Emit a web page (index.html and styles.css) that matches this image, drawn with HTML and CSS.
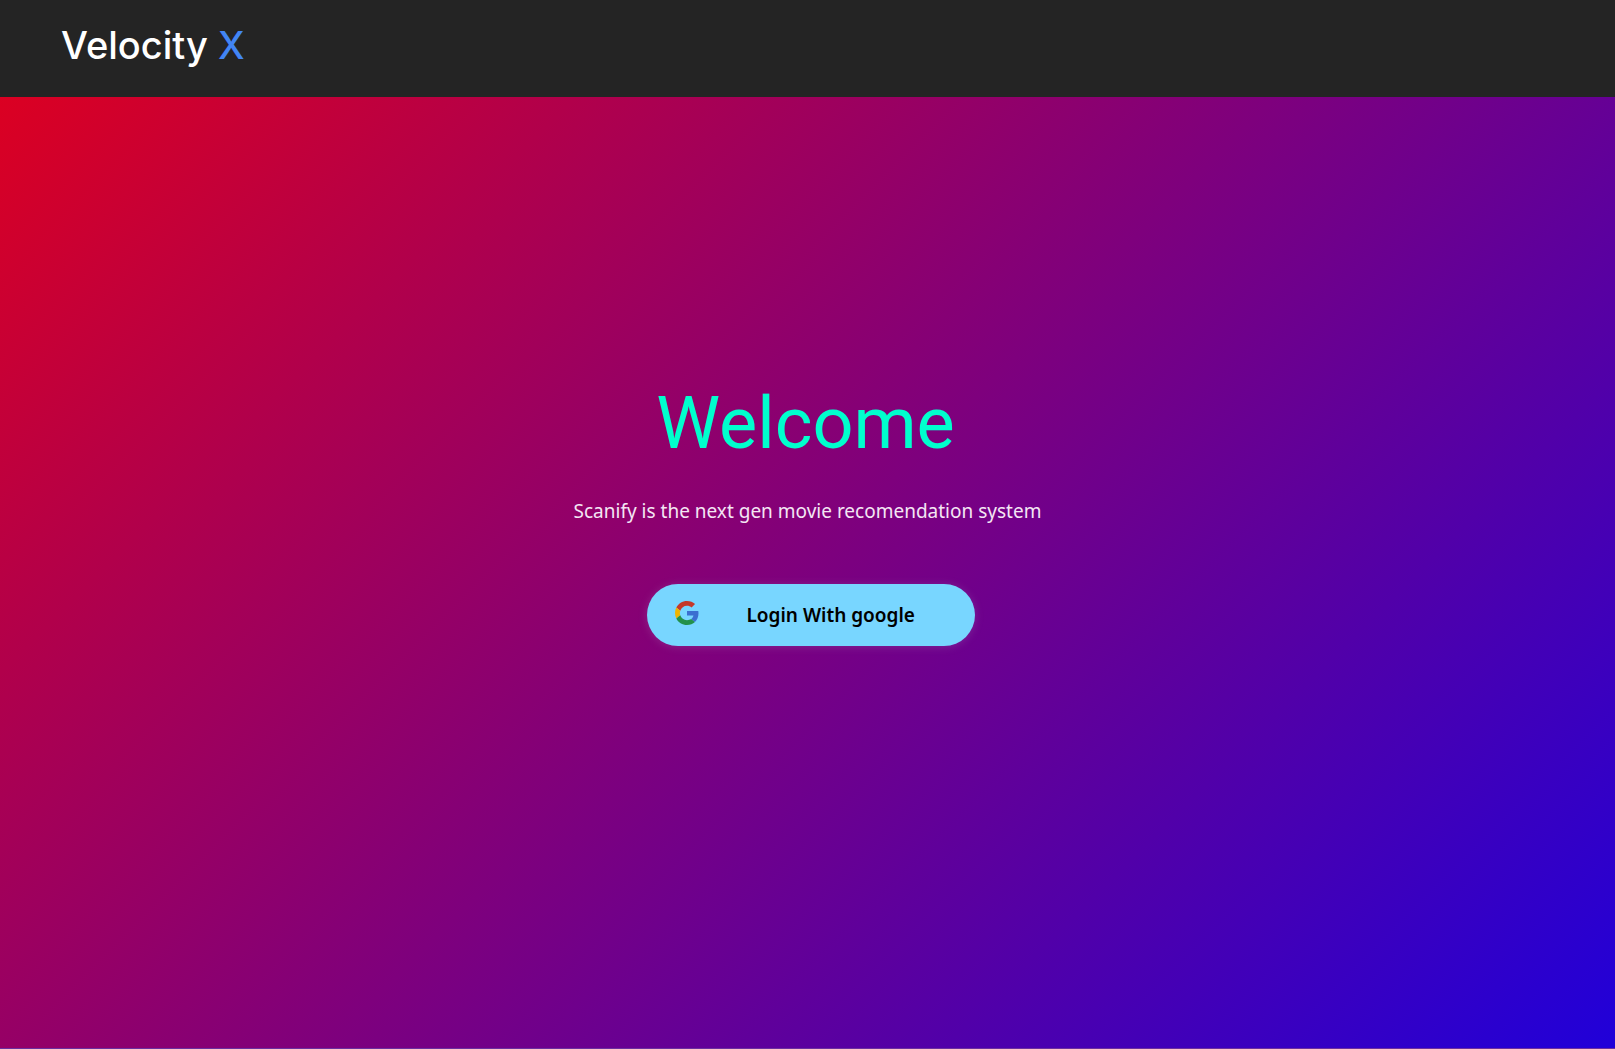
FILE: index.html
```html
<!DOCTYPE html>
<html lang="en">
<head>
  <meta charset="utf-8">
  <meta name="viewport" content="width=device-width, initial-scale=1">
  <title>Velocity X</title>
  <link rel="stylesheet" href="styles.css">
</head>
<body>
  <header class="site-header">
    <div class="brand">Velocity <span class="brand-mark">X</span></div>
  </header>
  <main class="hero">
    <h1 class="hero-title">Welcome</h1>
    <p class="hero-text">Scanify is the next gen movie recomendation system</p>
    <button class="login" type="button">
      <svg class="login-icon" viewBox="0 0 48 48" aria-hidden="true">
        <path fill="#c53929" d="M24 9.5c3.5 0 6.700 1.200 9.200 3.600l6.900-6.900C35.900 2.400 30.500 0 24 0 14.600 0 6.500 5.400 2.600 13.200l8 6.200C12.400 13.700 17.700 9.500 24 9.500z"/>
        <path fill="#3b6fd0" d="M47 24.600c0-1.600-.2-3.100-.4-4.600H24v9h12.900c-.6 3-2.200 5.500-4.700 7.200l7.700 6C44.400 38 47 31.800 47 24.600z"/>
        <path fill="#f0b400" d="M10.500 28.600c-.5-1.500-.8-3-.8-4.600s.3-3.100.8-4.600l-8-6.200C.9 16.500 0 20.100 0 24s.9 7.500 2.600 10.800l7.900-6.200z"/>
        <path fill="#23914a" d="M24 48c6.500 0 11.900-2.100 15.900-5.800l-7.700-6c-2.200 1.400-4.900 2.300-8.200 2.300-6.300 0-11.600-4.200-13.500-9.900l-7.900 6.200C6.500 42.600 14.600 48 24 48z"/>
      </svg>
      <span class="login-label">Login With google</span>
    </button>
  </main>
</body>
</html>
```
FILE: styles.css
```css
* {
  box-sizing: border-box;
}

body {
  margin: 0;
  min-height: 100vh;
  display: flex;
  flex-direction: column;
  font-family: "Noto Sans", "Open Sans", sans-serif;
}

.site-header {
  display: flex;
  padding: 22px 61px 29px;
  background: #242424;
}

.brand {
  color: #fff;
  font: 500 38px/46px "Inter", sans-serif;
}

.brand-mark {
  color: #4285f4;
}

.hero {
  flex: 1;
  display: flex;
  flex-direction: column;
  align-items: center;
  justify-content: center;
  padding-bottom: 118px;
  background: linear-gradient(135deg, #db0022, #2000d9);
  border-bottom: 1px solid #6a30a0;
}

.hero-title {
  margin: 0 4px 32px 0;
  color: #00ffcd;
  font: 400 72px/84px "Roboto", sans-serif;
}

.hero-text {
  margin: 0 0 60px;
  color: #f4e6f4;
  font-size: 19px;
  line-height: 26px;
}

.login {
  display: flex;
  align-items: center;
  width: 328px;
  height: 62px;
  margin-left: 6px;
  padding: 0 28px;
  border: 0;
  border-radius: 31px;
  background: #78d6ff;
  box-shadow: 0 1px 8px rgba(160, 120, 180, 0.3);
  color: #000;
  cursor: pointer;
  font: 600 19px/26px "Noto Sans", "Open Sans", sans-serif;
}

.login-icon {
  width: 24px;
  height: 24px;
  margin: 0 48px 4px 0;
}
```
